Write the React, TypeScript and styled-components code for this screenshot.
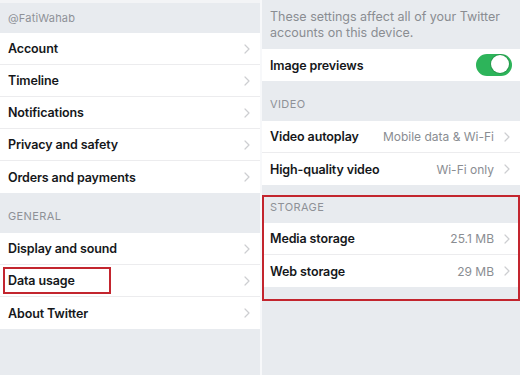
import React from 'react'
import styled, { createGlobalStyle } from 'styled-components'

const GlobalStyle = createGlobalStyle`
  html, body {
    margin: 0;
    padding: 0;
    background: #ffffff;
  }
  body {
    font-family: Inter, 'Noto Sans', 'Liberation Sans', sans-serif;
    -webkit-font-smoothing: antialiased;
  }
`

const Page = styled.div`
  display: flex;
  gap: 2px;
  width: 520px;
  height: 375px;
  overflow: hidden;
  background: #f7f8fa;
`

const Panel = styled.div<{ $width: number }>`
  display: flex;
  flex-direction: column;
  width: ${(p) => p.$width}px;
  height: 100%;
  background: #e8ebef;
`

// $shift moves the caption down (positive) or up (negative) inside its band
const SectionHeader = styled.div<{ $height: number; $shift?: number }>`
  height: ${(p) => p.$height}px;
  box-sizing: border-box;
  padding: ${(p) => Math.max(0, (p.$shift ?? 0) * 2)}px 8px ${(p) => Math.max(0, -(p.$shift ?? 0) * 2)}px;
  display: flex;
  align-items: center;
  color: #8e9197;
  font-size: 11px;
  font-weight: 400;
  letter-spacing: 0.4px;
  text-transform: uppercase;
`

const Handle = styled(SectionHeader)`
  text-transform: none;
  letter-spacing: 0.2px;
  border-top: 3px solid #f3f4f6;
`

const Note = styled.div`
  height: 49px;
  box-sizing: border-box;
  padding: 9px 8px 0;
  color: #8a8d92;
  font-size: 12.5px;
  line-height: 16px;
`

const List = styled.div`
  display: flex;
  flex-direction: column;
  background: #ffffff;
`

const Row = styled.div`
  height: 32px;
  box-sizing: border-box;
  display: flex;
  align-items: center;
  padding: 0 10px 0 8px;
  border-bottom: 1px solid #ececee;
  &:last-child {
    border-bottom: none;
  }
`

const Label = styled.span`
  flex: 1;
  display: flex;
  align-items: center;
  color: #15171a;
  font-size: 12.5px;
  font-weight: 600;
  letter-spacing: -0.12px;
  white-space: nowrap;
`

const Marked = styled.span`
  display: flex;
  align-items: center;
  box-sizing: border-box;
  width: 108px;
  height: 27px;
  margin-left: -5px;
  padding-left: 3px;
  border: 2px solid #c3252e;
`

const Value = styled.span`
  color: #8a8d92;
  font-size: 12px;
  font-weight: 400;
  margin-right: 10px;
  white-space: nowrap;
`

const Highlight = styled.div`
  display: flex;
  flex-direction: column;
  margin-top: 10px;
  padding-bottom: 14px;
  outline: 2px solid #c3252e;
  outline-offset: -2px;
  background: #e8ebef;
  & > ${List} {
    margin: 0 2px;
  }
  & ${Row} {
    padding-left: 6px;
    padding-right: 8px;
  }
`

const Toggle = styled.span<{ $on: boolean }>`
  position: relative;
  width: 36px;
  height: 22px;
  border-radius: 11px;
  background: ${(p) => (p.$on ? '#2db45a' : '#e5e5ea')};
  margin-right: -2px;
  &::after {
    content: '';
    position: absolute;
    top: 1px;
    left: ${(p) => (p.$on ? '15px' : '1px')};
    width: 18px;
    height: 18px;
    border-radius: 50%;
    background: #ffffff;
    box-shadow: 0 0 0 1px rgba(0, 0, 0, 0.15);
  }
`

const Chevron = () => (
  <svg width="6" height="10" viewBox="0 0 6 10">
    <path d="M1 1l4 4-4 4" fill="none" stroke="#cdced1" strokeWidth="1.2" strokeLinecap="round" strokeLinejoin="round" />
  </svg>
)

const NavRow = ({ label, value, marked }: { label: string; value?: string; marked?: boolean }) => (
  <Row>
    <Label>{marked ? <Marked>{label}</Marked> : label}</Label>
    {value && <Value>{value}</Value>}
    <Chevron />
  </Row>
)

const App = () => (
  <Page>
    <GlobalStyle />
    <Panel $width={260}>
      <Handle $height={33}>@FatiWahab</Handle>
      <List>
        <NavRow label="Account" />
        <NavRow label="Timeline" />
        <NavRow label="Notifications" />
        <NavRow label="Privacy and safety" />
        <NavRow label="Orders and payments" />
      </List>
      <SectionHeader $height={40} $shift={3}>General</SectionHeader>
      <List>
        <NavRow label="Display and sound" />
        <NavRow label="Data usage" marked />
        <NavRow label="About Twitter" />
      </List>
    </Panel>
    <Panel $width={258}>
      <Note>
        These settings affect all of your Twitter
        <br />
        accounts on this device.
      </Note>
      <List>
        <Row>
          <Label>Image previews</Label>
          <Toggle $on />
        </Row>
      </List>
      <SectionHeader $height={40} $shift={3}>Video</SectionHeader>
      <List>
        <NavRow label="Video autoplay" value="Mobile data & Wi-Fi" />
        <NavRow label="High-quality video" value="Wi-Fi only" />
      </List>
      <Highlight>
        <SectionHeader $height={28} $shift={-2}>Storage</SectionHeader>
        <List>
          <NavRow label="Media storage" value="25.1 MB" />
          <NavRow label="Web storage" value="29 MB" />
        </List>
      </Highlight>
    </Panel>
  </Page>
)

export default App
